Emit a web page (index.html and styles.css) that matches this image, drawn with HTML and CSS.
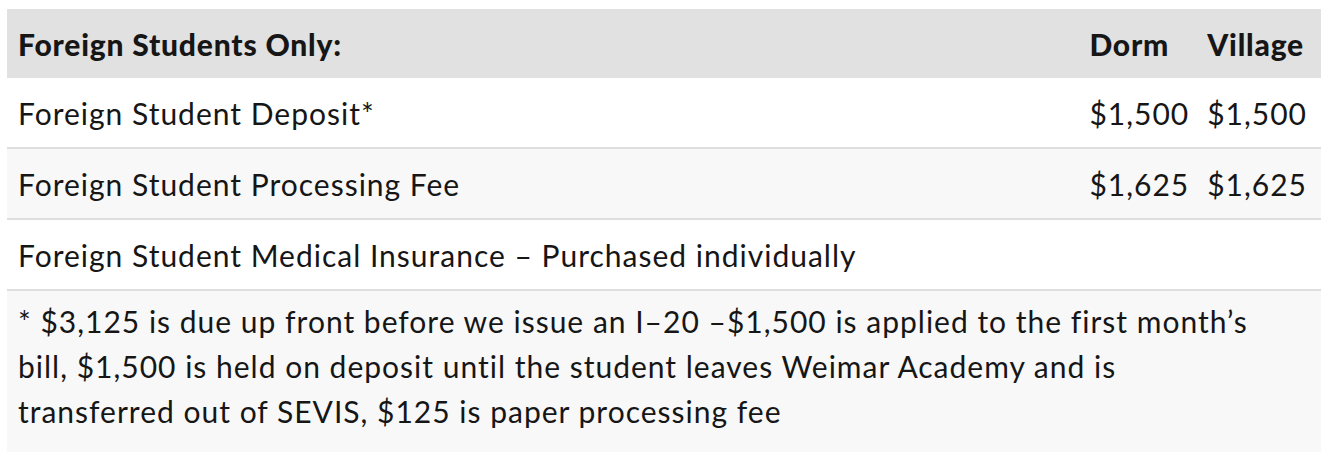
FILE: index.html
```html
<!DOCTYPE html>
<html>
<head>
<meta charset="utf-8">
<link rel="stylesheet" href="styles.css">
</head>
<body>
<div class="wrap">
<table class="fees">
  <thead>
    <tr class="head">
      <th class="label main">Foreign Students Only:</th>
      <th class="num">Dorm</th>
      <th class="num last">Village</th>
    </tr>
  </thead>
  <tbody>
    <tr class="row">
      <td class="label">Foreign Student Deposit*</td>
      <td class="num">$1,500</td>
      <td class="num last">$1,500</td>
    </tr>
    <tr class="row alt">
      <td class="label">Foreign Student Processing Fee</td>
      <td class="num">$1,625</td>
      <td class="num last">$1,625</td>
    </tr>
    <tr class="row">
      <td class="label" colspan="3">Foreign Student Medical Insurance – Purchased individually</td>
    </tr>
    <tr class="row alt note">
      <td class="label" colspan="3">* $3,125 is due up front before we issue an I–20 –$1,500 is applied to the first month’s bill, $1,500 is held on deposit until the student leaves Weimar Academy and is transferred out of SEVIS, $125 is paper processing fee</td>
    </tr>
  </tbody>
</table>
</div>
</body>
</html>
```

FILE: styles.css
```css
html, body {
  margin: 0;
  padding: 0;
  background: #ffffff;
}
.wrap {
  padding: 9px 9px 0 7px;
}
.fees {
  width: 100%;
  border-collapse: collapse;
  font-family: "Lato", "Liberation Sans", sans-serif;
  font-size: 30px;
  letter-spacing: 1px;
  color: #161616;
}
.fees th, .fees td {
  text-align: left;
  vertical-align: middle;
  padding: 0 11px;
  height: 69px;
}
.fees .main {
  width: 100%;
}
.fees .num {
  white-space: nowrap;
  padding: 0 10px 0 11px;
}
.fees .num.last {
  padding: 0 14px 0 8px;
}
.head {
  background: #e1e1e1;
}
.head th {
  font-weight: 900;
  letter-spacing: 0.8px;
}
.row {
  border-top: 2px solid #dedede;
}
tbody .row:first-child {
  border-top: none;
}
.alt {
  background: #f8f8f8;
}
.note td {
  line-height: 45px;
  padding: 8px 40px 20px 11px;
  height: auto;
}
```
